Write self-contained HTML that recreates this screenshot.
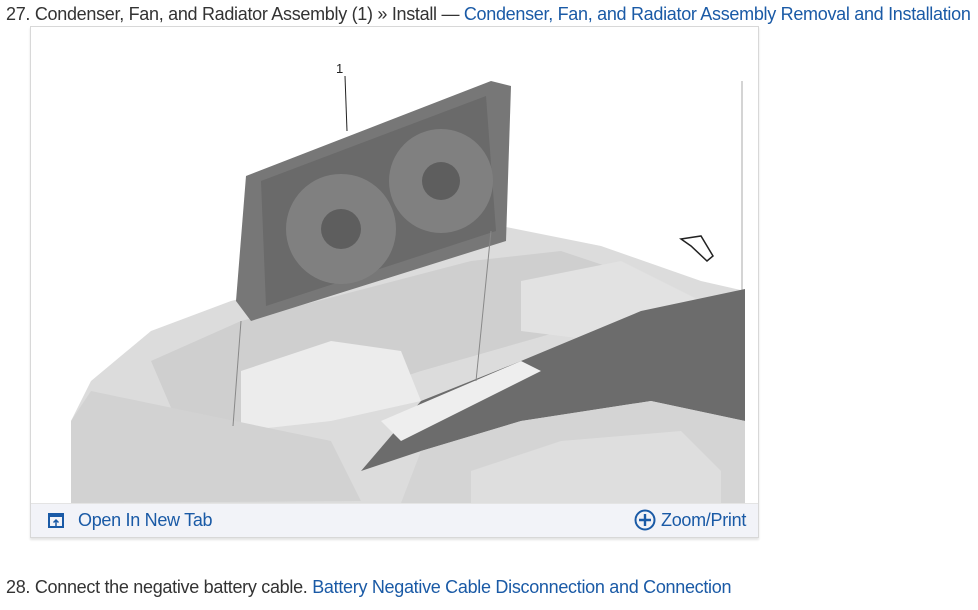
<!DOCTYPE html>
<html><head><meta charset="utf-8"><style>
body{margin:0;background:#fff;font-family:"Liberation Sans",sans-serif;color:#333;}
.t{position:absolute;font-size:18px;white-space:nowrap;letter-spacing:-0.3px}
a{color:#1a5aa6;text-decoration:none}
.box{position:absolute;left:30px;top:26px;width:727px;height:510px;border:1px solid #d8d8d8;box-shadow:0 2px 2px #e4e4e4;background:#fff}
.foot{position:absolute;left:0;right:0;bottom:0;height:33px;background:#f2f3f8;border-top:1px solid #e4e4e4}
.foot span{position:absolute;top:6px;font-size:18px;color:#1a5aa6;letter-spacing:-0.3px}
</style></head><body>
<div class="t" style="left:6px;top:4px">27. Condenser, Fan, and Radiator Assembly (1) » Install — <a>Condenser, Fan, and Radiator Assembly Removal and Installation</a></div>
<div class="box">
<svg style="position:absolute;left:0;top:0" width="727" height="476" viewBox="30 26 727 476">
<rect x="30" y="26" width="727" height="476" fill="#fff"/>
<line x1="741" y1="80" x2="741" y2="300" stroke="#aaa"/>
<path d="M70 420 L90 380 L150 330 L230 300 L430 250 L500 225 L600 245 L700 280 L744 290 L744 502 L70 502 Z" fill="#dcdcdc"/>
<path d="M150 360 L240 320 L470 260 L560 250 L650 280 L560 330 L420 370 L330 400 L230 430 L180 430 Z" fill="#cfcfcf"/>
<path d="M240 370 L330 340 L400 350 L420 400 L330 420 L240 430 Z" fill="#ececec"/>
<path d="M520 280 L620 260 L700 300 L600 340 L520 330 Z" fill="#e2e2e2"/>
<path d="M70 420 L90 390 L330 440 L360 500 L70 502 Z" fill="#d2d2d2"/>
<path d="M360 470 L420 400 L520 360 L640 310 L744 288 L744 420 L650 400 L520 420 L420 450 Z" fill="#6c6c6c"/>
<path d="M420 450 L520 420 L650 400 L744 420 L744 502 L400 502 Z" fill="#d4d4d4"/>
<path d="M470 470 L560 440 L680 430 L720 470 L720 502 L470 502 Z" fill="#dedede"/>
<path d="M380 420 L520 360 L540 370 L400 440 Z" fill="#eee"/>
<path d="M245 175 L490 80 L510 85 L505 240 L250 320 L235 300 Z" fill="#777"/>
<path d="M260 180 L485 95 L495 230 L265 305 Z" fill="#6a6a6a"/>
<circle cx="340" cy="228" r="55" fill="#808080"/><circle cx="340" cy="228" r="20" fill="#5e5e5e"/>
<circle cx="440" cy="180" r="52" fill="#808080"/><circle cx="440" cy="180" r="19" fill="#5e5e5e"/>
<line x1="344" y1="75" x2="346" y2="130" stroke="#222"/>
<line x1="240" y1="320" x2="232" y2="425" stroke="#888"/>
<line x1="490" y1="230" x2="475" y2="380" stroke="#888"/>
<path d="M680 238 L700 235 L712 255 L706 260 L690 245 Z" fill="#fff" stroke="#222" stroke-width="1.5"/>
<text x="335" y="72" font-size="13" font-family="Liberation Sans" fill="#222">1</text>
</svg>
<div class="foot">
<svg style="position:absolute;left:17px;top:9px" width="16" height="16" viewBox="0 0 16 16"><rect x="1" y="1" width="14" height="13" fill="none" stroke="#1a5aa6" stroke-width="2"/><rect x="1" y="1" width="14" height="3" fill="#1a5aa6"/><path d="M8 13V7M5.5 9.5L8 7l2.5 2.5" stroke="#1a5aa6" stroke-width="1.5" fill="none"/></svg>
<span style="left:47px">Open In New Tab</span>
<svg style="position:absolute;left:603px;top:5px" width="22" height="22" viewBox="0 0 22 22"><circle cx="11" cy="11" r="9.5" fill="none" stroke="#1a5aa6" stroke-width="2"/><path d="M11 5v12M5 11h12" stroke="#1a5aa6" stroke-width="2.4"/></svg>
<span style="left:630px">Zoom/Print</span>
</div>
</div>
<div class="t" style="left:6px;top:577px">28. Connect the negative battery cable. <a>Battery Negative Cable Disconnection and Connection</a></div>
</body></html>
